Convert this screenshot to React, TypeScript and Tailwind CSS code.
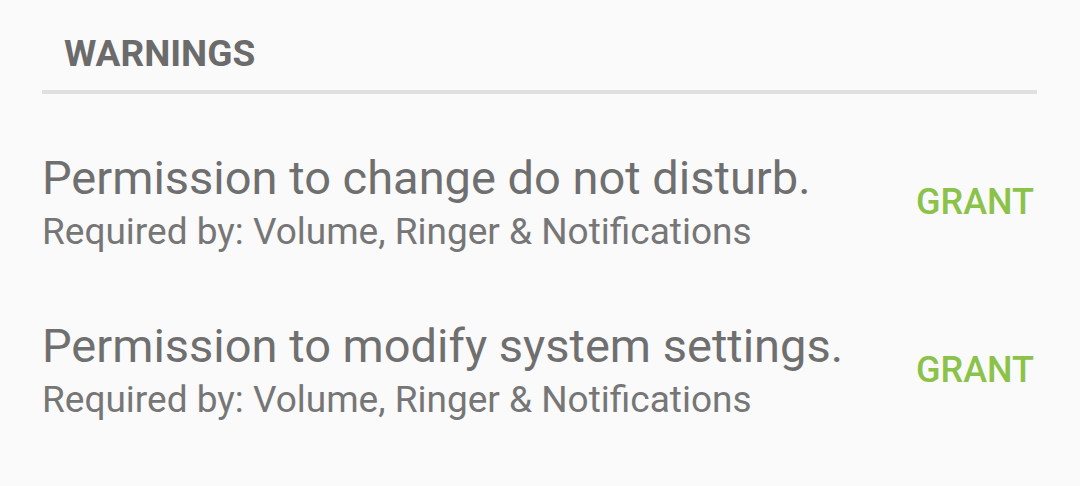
import React from "react";

const rows = [
  { title: "Permission to change do not disturb.", sub: "Required by: Volume, Ringer & Notifications" },
  { title: "Permission to modify system settings.", sub: "Required by: Volume, Ringer & Notifications" },
];

export default function App() {
  return (
    <div
      className="w-[1080px] h-[486px] bg-[#fafafa] overflow-hidden"
      style={{ fontFamily: "Roboto, 'Noto Sans', sans-serif" }}
    >
      <div className="px-[42px]">
        <div className="pt-[35px] pl-[22px] pb-[18px]">
          <div className="text-[37px] leading-none font-bold text-[#6b6b6b]">WARNINGS</div>
        </div>
        <div className="h-[4px] bg-[#e0e0e0] mr-[1px]" />
        <div className="flex flex-col pt-[60px] gap-[72px]">
          {rows.map((r, i) => (
            <div key={i} className="flex items-center justify-between">
              <div className="flex flex-col gap-[12px]">
                <div className="text-[47px] leading-none text-[#6f6f6f]">{r.title}</div>
                <div className="text-[37px] leading-none text-[#767676]">{r.sub}</div>
              </div>
              <div className="text-[36px] leading-none font-medium text-[#8bc34a] pr-[4px]">GRANT</div>
            </div>
          ))}
        </div>
      </div>
    </div>
  );
}
